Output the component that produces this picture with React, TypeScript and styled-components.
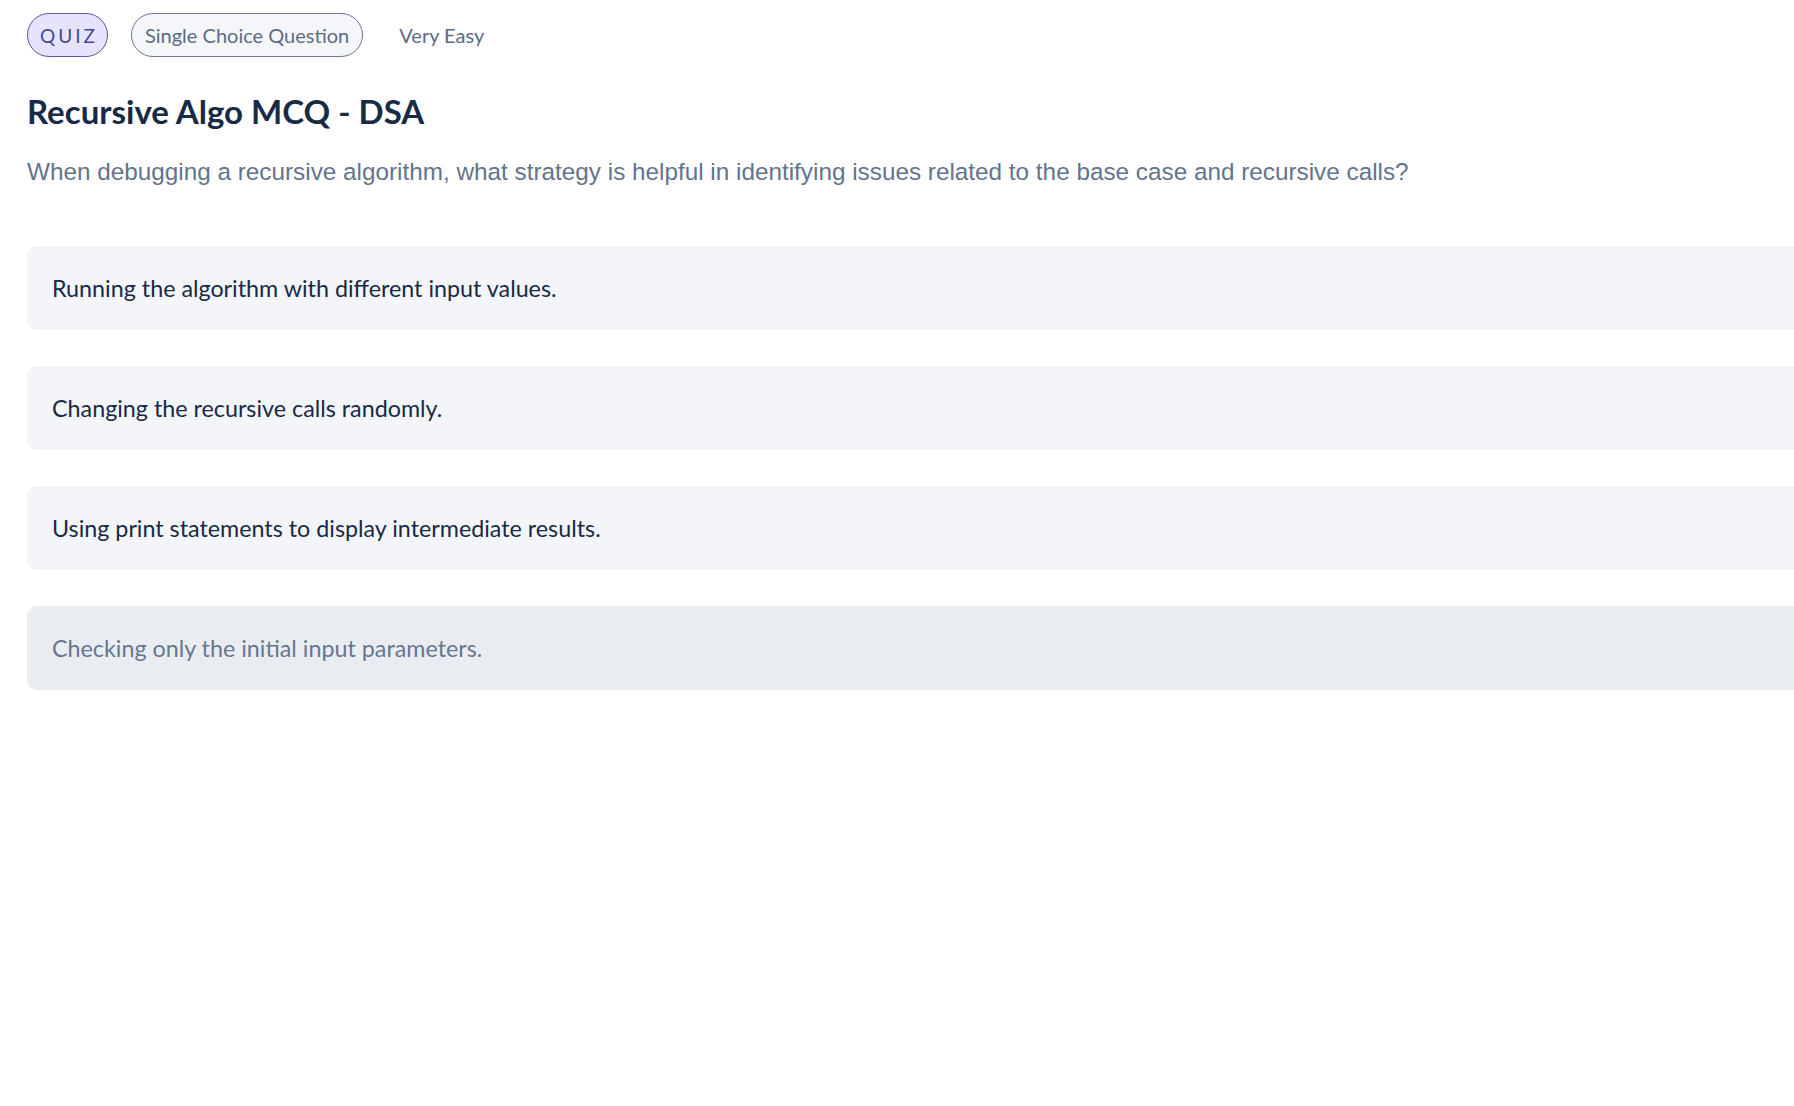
import styled, { createGlobalStyle } from 'styled-components'

const GlobalStyle = createGlobalStyle`
  html, body {
    margin: 0;
    padding: 0;
    background: #ffffff;
    overflow: hidden;
  }
  body {
    font-family: Lato, "Liberation Sans", sans-serif;
  }
`

// The page is wider than the window so the option cards run off the right edge
const Page = styled.div`
  width: 1900px;
  padding: 13px 0 0 27px;
  box-sizing: border-box;
`

const TagRow = styled.div`
  display: flex;
  align-items: center;
  gap: 23px;
`

const QuizPill = styled.span`
  display: inline-flex;
  align-items: center;
  justify-content: center;
  height: 44px;
  width: 81px;
  box-sizing: border-box;
  border: 1.5px solid #5d53a8;
  border-radius: 22px;
  background: #e6e4fc;
  color: #4a4790;
  font-size: 19px;
  letter-spacing: 3px;
  padding-left: 3px;
`

const TypePill = styled.span`
  display: inline-flex;
  align-items: center;
  height: 44px;
  box-sizing: border-box;
  padding: 0 13px;
  border: 1.5px solid #6b7890;
  border-radius: 22px;
  background: #f4f6fa;
  color: #5c6b84;
  font-size: 20px;
`

const Difficulty = styled.span`
  margin-left: 13px;
  color: #5c6b84;
  font-size: 20px;
`

const Title = styled.h1`
  margin: 35px 0 0;
  font-size: 33px;
  font-weight: 700;
  color: #172a46;
  line-height: 1.2;
`

const Question = styled.p`
  margin: 24px 0 0;
  font-family: "Liberation Sans", Arial, sans-serif;
  font-size: 24.3px;
  color: #63748d;
  line-height: 1.3;
`

const Options = styled.div`
  display: flex;
  flex-direction: column;
  gap: 36px;
  margin-top: 59px;
`

const Option = styled.div<{ $muted?: boolean }>`
  display: flex;
  align-items: center;
  height: 84px;
  padding: 0 25px;
  border-radius: 10px;
  background: ${(p) => (p.$muted ? '#e9edf2' : '#f4f5f9')};
  color: ${(p) => (p.$muted ? '#66778f' : '#172a46')};
  font-size: 23.3px;
`

const options = [
  { text: 'Running the algorithm with different input values.' },
  { text: 'Changing the recursive calls randomly.' },
  { text: 'Using print statements to display intermediate results.' },
  { text: 'Checking only the initial input parameters.', muted: true },
]

export default function App() {
  return (
    <>
      <GlobalStyle />
      <Page>
        <TagRow>
          <QuizPill>QUIZ</QuizPill>
          <TypePill>Single Choice Question</TypePill>
          <Difficulty>Very Easy</Difficulty>
        </TagRow>
        <Title>Recursive Algo MCQ - DSA</Title>
        <Question>
          When debugging a recursive algorithm, what strategy is helpful in identifying issues related to the base case and recursive calls?
        </Question>
        <Options>
          {options.map((o) => (
            <Option key={o.text} $muted={o.muted}>
              {o.text}
            </Option>
          ))}
        </Options>
      </Page>
    </>
  )
}
